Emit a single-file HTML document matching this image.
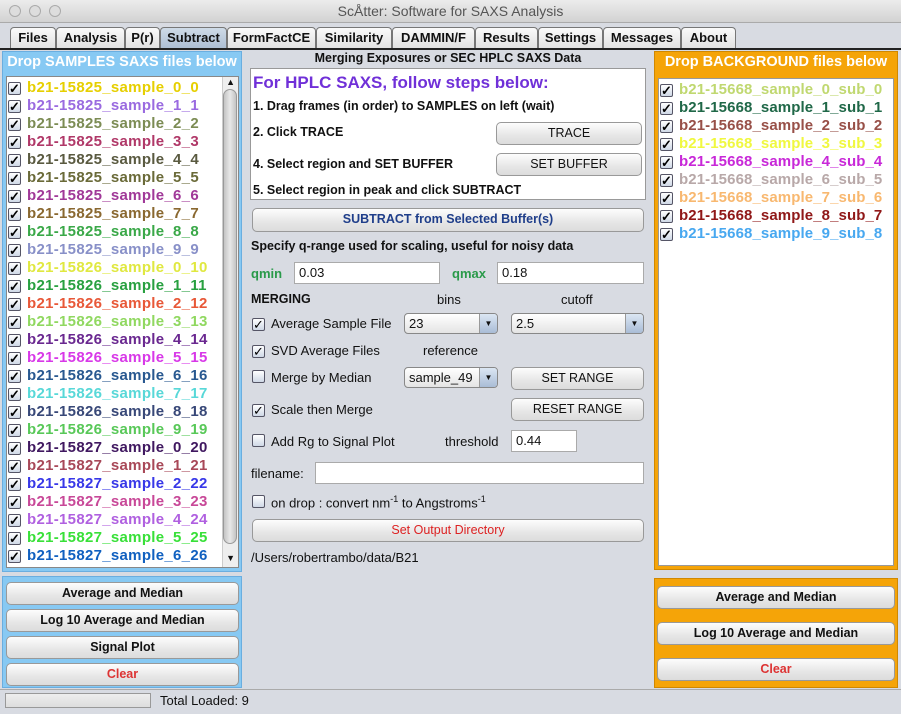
<!DOCTYPE html><html><head><style>
*{box-sizing:border-box;margin:0;padding:0}
body{width:901px;height:714px;background:#d8dbe2;font-family:"Liberation Sans",sans-serif;position:relative;overflow:hidden;font-size:13px;color:#111}
.a{position:absolute}
.tab{position:absolute;top:27px;height:21px;border:1px solid #777;border-bottom:none;border-radius:4px 4px 0 0;background:linear-gradient(#fafafa,#e2e2e2);font-weight:bold;font-size:13px;text-align:center;line-height:20px}
.btn{position:absolute;border:1px solid #999;border-radius:5px;background:linear-gradient(#fdfdfd,#e6e6e6 60%,#dcdcdc);text-align:center;font-size:12.5px;line-height:21px;height:23px}
.b{font-weight:bold}
.row{position:absolute;left:8px;font-weight:bold;font-size:15px;white-space:nowrap;height:18px;line-height:18px;letter-spacing:0.3px}
.cb{display:inline-block;width:13px;height:13px;border:1px solid #556;border-radius:2px;background:linear-gradient(#fff,#cfd8e6);vertical-align:-1px;margin-right:6px;position:relative;font-size:13px;line-height:11px;text-align:center;color:#000;letter-spacing:0}
.tf{position:absolute;background:#fff;border:1px solid #aaa;height:22px;line-height:20px;padding-left:4px;font-size:13px}
.combo{position:absolute;height:21px;border:1px solid #888;border-radius:4px;background:linear-gradient(#fff,#e4e4e4);font-size:13px;line-height:19px;padding-left:4px}
.combo i{position:absolute;right:0;top:0;width:18px;height:19px;border-left:1px solid #999;background:linear-gradient(#dbe6f3,#a9bcd6);font-style:normal;font-size:8px;text-align:center;line-height:19px;border-radius:0 3px 3px 0}
.hd{white-space:nowrap;font-size:14.5px}
</style></head><body>
<div class="a" style="left:0;top:0;width:901px;height:23px;background:linear-gradient(#ececec,#d2d2d2);border-bottom:1px solid #aaa"></div>
<div class="a" style="left:9px;top:5px;width:12px;height:12px;border-radius:50%;border:1px solid #aaa;background:#ddd"></div>
<div class="a" style="left:29px;top:5px;width:12px;height:12px;border-radius:50%;border:1px solid #aaa;background:#ddd"></div>
<div class="a" style="left:49px;top:5px;width:12px;height:12px;border-radius:50%;border:1px solid #aaa;background:#ddd"></div>
<div class="a" style="left:0;top:3px;width:901px;text-align:center;color:#555;font-size:14px">ScÅtter: Software for SAXS Analysis</div>
<div class="a" style="left:0;top:48px;width:901px;height:2px;background:#222"></div>
<div class="tab" style="left:10px;width:46px">Files</div>
<div class="tab" style="left:56px;width:69px">Analysis</div>
<div class="tab" style="left:125px;width:35px">P(r)</div>
<div class="tab" style="left:160px;width:67px;background:linear-gradient(#cfdbe8,#aebfd3)">Subtract</div>
<div class="tab" style="left:227px;width:89px">FormFactCE</div>
<div class="tab" style="left:316px;width:76px">Similarity</div>
<div class="tab" style="left:392px;width:83px">DAMMIN/F</div>
<div class="tab" style="left:475px;width:63px">Results</div>
<div class="tab" style="left:538px;width:65px">Settings</div>
<div class="tab" style="left:603px;width:78px">Messages</div>
<div class="tab" style="left:681px;width:55px">About</div>

<div class="a" style="left:2px;top:51px;width:240px;height:521px;background:#87c9f3;border:1px solid #6aaee0"></div>
<div class="a b hd" style="left:2px;top:54px;width:240px;text-align:center;color:#fff">Drop SAMPLES SAXS files below</div>
<div class="a" style="left:6px;top:76px;width:233px;height:492px;background:#fff;border:1px solid #888;overflow:hidden">
<div class="a" style="right:0;top:0;width:16px;height:492px;background:#eee;border-left:1px solid #ccc"></div>
<div class="a" style="right:1px;top:12px;width:14px;height:455px;border-radius:7px;background:linear-gradient(90deg,#c4c4c4,#e8e8e8,#c4c4c4);border:1px solid #999"></div>
<div class="a" style="right:3px;top:0;font-size:9px">▲</div>
<div class="a" style="right:3px;top:476px;font-size:9px">▼</div>
</div>
<div class="a" style="left:2px;top:576px;width:240px;height:112px;background:#87c9f3;border:1px solid #6aaee0"></div>
<div class="btn b" style="left:6px;top:582px;width:233px">Average and Median</div>
<div class="btn b" style="left:6px;top:609px;width:233px">Log 10 Average and Median</div>
<div class="btn b" style="left:6px;top:636px;width:233px">Signal Plot</div>
<div class="btn b" style="left:6px;top:663px;width:233px;color:#d33">Clear</div>

<div class="a b" style="left:246px;top:51px;width:404px;text-align:center;font-size:12.5px">Merging Exposures or SEC HPLC SAXS Data</div>
<div class="a" style="left:250px;top:68px;width:396px;height:132px;background:#fff;border:1px solid #999"></div>
<div class="a b" style="left:253px;top:73px;color:#7030d8;font-size:17px">For HPLC SAXS, follow steps below:</div>
<div class="a b" style="left:253px;top:99px;font-size:12.5px">1. Drag frames (in order) to SAMPLES on left (wait)</div>
<div class="a b" style="left:253px;top:125px;font-size:12.5px">2. Click TRACE</div>
<div class="a b" style="left:253px;top:157px;font-size:12.5px">4. Select region and SET BUFFER</div>
<div class="a b" style="left:253px;top:183px;font-size:12.5px">5. Select region in peak and click SUBTRACT</div>
<div class="btn" style="left:496px;top:122px;width:146px">TRACE</div>
<div class="btn" style="left:496px;top:153px;width:146px">SET BUFFER</div>
<div class="btn b" style="left:252px;top:208px;width:392px;color:#1f3e8a;height:24px">SUBTRACT from Selected Buffer(s)</div>
<div class="a b" style="left:251px;top:239px;font-size:12.5px">Specify q-range used for scaling, useful for noisy data</div>
<div class="a b" style="left:251px;top:266px;color:#2a9a4a">qmin</div>
<div class="tf" style="left:294px;top:262px;width:146px">0.03</div>
<div class="a b" style="left:452px;top:266px;color:#2a9a4a">qmax</div>
<div class="tf" style="left:497px;top:262px;width:147px">0.18</div>
<div class="a b" style="left:251px;top:292px;font-size:12.5px">MERGING</div>
<div class="a" style="left:437px;top:292px">bins</div>
<div class="a" style="left:561px;top:292px">cutoff</div>
<div class="a" style="left:252px;top:316px"><span class="cb">✓</span>Average Sample File</div>
<div class="combo" style="left:404px;top:313px;width:94px">23<i>▼</i></div>
<div class="combo" style="left:511px;top:313px;width:133px">2.5<i>▼</i></div>
<div class="a" style="left:252px;top:343px"><span class="cb">✓</span>SVD Average Files</div>
<div class="a" style="left:423px;top:343px">reference</div>
<div class="a" style="left:252px;top:370px"><span class="cb"></span>Merge by Median</div>
<div class="combo" style="left:404px;top:367px;width:94px">sample_49<i>▼</i></div>
<div class="btn" style="left:511px;top:367px;width:133px">SET RANGE</div>
<div class="a" style="left:252px;top:402px"><span class="cb">✓</span>Scale then Merge</div>
<div class="btn" style="left:511px;top:398px;width:133px">RESET RANGE</div>
<div class="a" style="left:252px;top:434px"><span class="cb"></span>Add Rg to Signal Plot</div>
<div class="a" style="left:445px;top:434px">threshold</div>
<div class="tf" style="left:511px;top:430px;width:66px">0.44</div>
<div class="a" style="left:251px;top:466px">filename:</div>
<div class="tf" style="left:315px;top:462px;width:329px"></div>
<div class="a" style="left:252px;top:494px"><span class="cb"></span>on drop : convert nm<sup style="font-size:9px">-1</sup> to Angstroms<sup style="font-size:9px">-1</sup></div>
<div class="btn" style="left:252px;top:519px;width:392px;color:#d22">Set Output Directory</div>
<div class="a" style="left:251px;top:550px">/Users/robertrambo/data/B21</div>

<div class="a" style="left:654px;top:51px;width:244px;height:519px;background:#f5a408;border:1px solid #d08800"></div>
<div class="a b hd" style="left:654px;top:54px;width:244px;text-align:center;color:#fff">Drop BACKGROUND files below</div>
<div class="a" style="left:658px;top:78px;width:236px;height:488px;background:#fff;border:1px solid #999"></div>
<div class="a" style="left:654px;top:578px;width:244px;height:110px;background:#f5a408;border:1px solid #d08800"></div>
<div class="btn b" style="left:657px;top:586px;width:238px">Average and Median</div>
<div class="btn b" style="left:657px;top:622px;width:238px">Log 10 Average and Median</div>
<div class="btn b" style="left:657px;top:658px;width:238px;color:#d33">Clear</div>

<div class="a" style="left:0;top:689px;width:901px;height:1px;background:#aaa"></div>
<div class="a" style="left:5px;top:693px;width:146px;height:15px;border:1px solid #999;background:linear-gradient(#eee,#ddd)"></div>
<div class="a" style="left:160px;top:693px">Total Loaded: 9</div>

<div style="position:absolute;left:0;top:0">
<div class="row" style="top:79px;color:#e6cf00"><span class="cb">✓</span>b21-15825_sample_0_0</div>
<div class="row" style="top:97px;color:#9a6ae0"><span class="cb">✓</span>b21-15825_sample_1_1</div>
<div class="row" style="top:115px;color:#7c8c54"><span class="cb">✓</span>b21-15825_sample_2_2</div>
<div class="row" style="top:133px;color:#b03868"><span class="cb">✓</span>b21-15825_sample_3_3</div>
<div class="row" style="top:151px;color:#5a5a40"><span class="cb">✓</span>b21-15825_sample_4_4</div>
<div class="row" style="top:169px;color:#6a6a38"><span class="cb">✓</span>b21-15825_sample_5_5</div>
<div class="row" style="top:187px;color:#a03898"><span class="cb">✓</span>b21-15825_sample_6_6</div>
<div class="row" style="top:205px;color:#8a6830"><span class="cb">✓</span>b21-15825_sample_7_7</div>
<div class="row" style="top:223px;color:#3aa848"><span class="cb">✓</span>b21-15825_sample_8_8</div>
<div class="row" style="top:241px;color:#8890c8"><span class="cb">✓</span>b21-15825_sample_9_9</div>
<div class="row" style="top:259px;color:#e0e840"><span class="cb">✓</span>b21-15826_sample_0_10</div>
<div class="row" style="top:277px;color:#28a040"><span class="cb">✓</span>b21-15826_sample_1_11</div>
<div class="row" style="top:295px;color:#e85838"><span class="cb">✓</span>b21-15826_sample_2_12</div>
<div class="row" style="top:313px;color:#90d860"><span class="cb">✓</span>b21-15826_sample_3_13</div>
<div class="row" style="top:331px;color:#6a2890"><span class="cb">✓</span>b21-15826_sample_4_14</div>
<div class="row" style="top:349px;color:#d838e8"><span class="cb">✓</span>b21-15826_sample_5_15</div>
<div class="row" style="top:367px;color:#285890"><span class="cb">✓</span>b21-15826_sample_6_16</div>
<div class="row" style="top:385px;color:#58d8d8"><span class="cb">✓</span>b21-15826_sample_7_17</div>
<div class="row" style="top:403px;color:#384878"><span class="cb">✓</span>b21-15826_sample_8_18</div>
<div class="row" style="top:421px;color:#58c858"><span class="cb">✓</span>b21-15826_sample_9_19</div>
<div class="row" style="top:439px;color:#401860"><span class="cb">✓</span>b21-15827_sample_0_20</div>
<div class="row" style="top:457px;color:#a84858"><span class="cb">✓</span>b21-15827_sample_1_21</div>
<div class="row" style="top:475px;color:#3838e8"><span class="cb">✓</span>b21-15827_sample_2_22</div>
<div class="row" style="top:493px;color:#c84898"><span class="cb">✓</span>b21-15827_sample_3_23</div>
<div class="row" style="top:511px;color:#b060e0"><span class="cb">✓</span>b21-15827_sample_4_24</div>
<div class="row" style="top:529px;color:#38e038"><span class="cb">✓</span>b21-15827_sample_5_25</div>
<div class="row" style="top:547px;color:#1060c0"><span class="cb">✓</span>b21-15827_sample_6_26</div>
</div>
<div style="position:absolute;left:652px;top:0">
<div class="row" style="top:81px;color:#c0d870;letter-spacing:0.1px"><span class="cb">✓</span>b21-15668_sample_0_sub_0</div>
<div class="row" style="top:99px;color:#206848;letter-spacing:0.1px"><span class="cb">✓</span>b21-15668_sample_1_sub_1</div>
<div class="row" style="top:117px;color:#985048;letter-spacing:0.1px"><span class="cb">✓</span>b21-15668_sample_2_sub_2</div>
<div class="row" style="top:135px;color:#f0f840;letter-spacing:0.1px"><span class="cb">✓</span>b21-15668_sample_3_sub_3</div>
<div class="row" style="top:153px;color:#c828d8;letter-spacing:0.1px"><span class="cb">✓</span>b21-15668_sample_4_sub_4</div>
<div class="row" style="top:171px;color:#b8a8a8;letter-spacing:0.1px"><span class="cb">✓</span>b21-15668_sample_6_sub_5</div>
<div class="row" style="top:189px;color:#f8b870;letter-spacing:0.1px"><span class="cb">✓</span>b21-15668_sample_7_sub_6</div>
<div class="row" style="top:207px;color:#901818;letter-spacing:0.1px"><span class="cb">✓</span>b21-15668_sample_8_sub_7</div>
<div class="row" style="top:225px;color:#48a8f0;letter-spacing:0.1px"><span class="cb">✓</span>b21-15668_sample_9_sub_8</div>
</div>
</body></html>
